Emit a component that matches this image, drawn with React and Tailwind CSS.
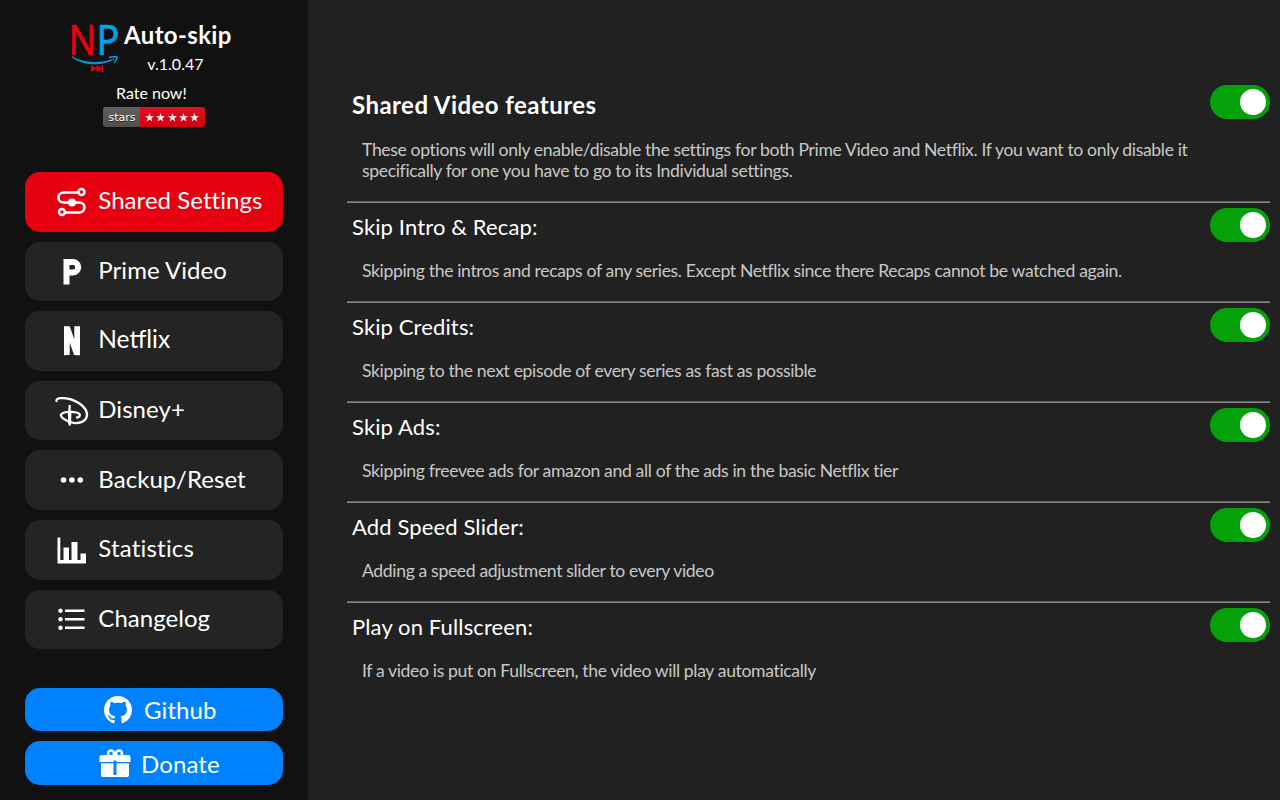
import React from "react";
import { RiNetflixFill } from "react-icons/ri";
import { BsGithub } from "react-icons/bs";

function Logo() {
  return (
    <div className="flex h-[50px] w-[48px] shrink-0 flex-col">
      <div className="flex h-[34px] text-[42px] leading-[34px] [font-family:'Noto_Sans',sans-serif]">
        <span className="w-[26px] origin-left -translate-x-[2.500px] scale-x-[0.87] text-[#e60010] [-webkit-text-stroke:0.6px_#e60010]">N</span>
        <span className="w-[22px] origin-left -translate-x-[0.500px] scale-x-[0.9] text-[#00a3e4] [-webkit-text-stroke:0.6px_#00a3e4]">P</span>
      </div>
      <svg className="h-4 w-[48px]" viewBox="0 34 48 16">
        <path d="M1 34.800 C12 41.500 30 42.500 43 37 C30 44.500 11 43 1 34.800Z" fill="#00a3e4" stroke="#00a3e4" strokeWidth="0.900" />
        <path d="M38 35.500 C42 34.500 44 34.500 46 35 C46 37 45 39 43 41" fill="none" stroke="#00a3e4" strokeWidth="1.500" />
        <path d="M20 43 L26 46.500 L20 50Z M25.500 43 L31.500 46.500 L25.500 50Z M30.500 43h1.700v7h-1.700z" fill="#e60010" />
      </svg>
    </div>
  );
}

const svg = "h-9 w-9";
const icons = {
  shared: (
    <svg className={svg} viewBox="0 0 36 36" fill="none" stroke="#fff" strokeWidth="2.500">
      <path d="M25 8.500H9.500a5 5 0 0 0-5 5a5 5 0 0 0 5 5h16a5 5 0 0 1 5 5a5 5 0 0 1-5 5H12" />
      <circle cx="27.500" cy="8" r="3" /><circle cx="8" cy="28" r="3" /><circle cx="18" cy="18.500" r="4" fill="#fff" stroke="none" />
    </svg>
  ),
  prime: (
    <svg className={svg} viewBox="0 0 36 36" fill="none" stroke="#fff" strokeWidth="6">
      <path d="M12.500 31.500V9h6.500a5 5 0 0 1 0 10.500h-6" />
    </svg>
  ),
  netflix: (
    <span className="flex h-9 w-9 items-center justify-center"><RiNetflixFill className="h-[34px] w-[32px]" /></span>
  ),
  disney: (
    <svg className={svg} viewBox="0 0 36 36" fill="none" stroke="#fff" strokeWidth="2.300" strokeLinecap="round">
      <path d="M2.500 8C1.500 5 9 4.200 16 6.200C26 9.200 33.500 15.700 33 22.500C32 29.500 24 31 18 29.500C11.500 28 6 24 7 21.500C9 18 23 18 25.500 21C26.500 23 25 24.500 23 24.500M15.700 13C15 17.500 15 26.500 15.800 31.500" />
      <path d="M16 18.500L15.600 30" strokeWidth="3" />
    </svg>
  ),
  backup: (
    <svg className={svg} viewBox="0 0 36 36" fill="#fff">
      <circle cx="9.500" cy="18" r="2.800" /><circle cx="17.900" cy="18" r="2.800" /><circle cx="26.300" cy="18" r="2.800" />
    </svg>
  ),
  stats: (
    <svg className={svg} viewBox="0 0 36 36" fill="#fff">
      <path d="M3.500 5.500h2.800V28h3.200V15.500h5.500V28H17.500V10h6v18h3v-6.500h5.500v10H3.500z" />
    </svg>
  ),
  changelog: (
    <svg className={svg} viewBox="0 0 36 36" fill="#fff">
      <path d="M11 8.500h19.500v2.600H11zM11 17h19.500v2.600H11zM11 25.400h19.500V28H11z" />
      <circle cx="6.500" cy="9.800" r="2.200" /><circle cx="6.500" cy="18.300" r="2.200" /><circle cx="6.500" cy="26.700" r="2.200" />
    </svg>
  ),
};

const nav = [
  ["shared", "Shared Settings"],
  ["prime", "Prime Video"],
  ["netflix", "Netflix"],
  ["disney", "Disney+"],
  ["backup", "Backup/Reset"],
  ["stats", "Statistics"],
  ["changelog", "Changelog"],
];

const options = [
  ["Skip Intro & Recap:", "Skipping the intros and recaps of any series. Except Netflix since there Recaps cannot be watched again."],
  ["Skip Credits:", "Skipping to the next episode of every series as fast as possible"],
  ["Skip Ads:", "Skipping freevee ads for amazon and all of the ads in the basic Netflix tier"],
  ["Add Speed Slider:", "Adding a speed adjustment slider to every video"],
  ["Play on Fullscreen:", "If a video is put on Fullscreen, the video will play automatically"],
];

function Toggle() {
  return (
    <button className="flex h-[34px] w-[60px] shrink-0 items-center justify-end rounded-full bg-[#04a108] pr-1">
      <span className="size-[26px] rounded-full bg-white" />
    </button>
  );
}

function Star() {
  return (
    <svg className="size-[9px]" viewBox="0 0 20 20" fill="#fff">
      <path d="M10 0l2.400 7.200H20l-6.100 4.500 2.300 7.300L10 14.500 3.800 19l2.300-7.300L0 7.200h7.600z" />
    </svg>
  );
}

function Gift() {
  return (
    <svg className="h-[30px] w-8" viewBox="0 0 32 30" fill="#fff">
      <circle cx="12" cy="5.500" r="3" fill="none" stroke="#fff" strokeWidth="2.500" />
      <circle cx="20" cy="5.500" r="3" fill="none" stroke="#fff" strokeWidth="2.500" />
      <path d="M2.500 7h27a2 2 0 0 1 2 2v5h-14v-1.500h-3V14h-14V9a2 2 0 0 1 2-2zM2 15.300h12.500V27h3V15.300H30V27a2 2 0 0 1-2 2H4a2 2 0 0 1-2-2z" />
    </svg>
  );
}

export default function App() {
  return (
    <div className="flex h-[800px] w-[1280px] overflow-hidden bg-[#212121] font-[Lato,sans-serif] text-white">
      <aside className="flex w-[308px] shrink-0 flex-col bg-[#111] px-[25px]">
        <header className="flex h-[172px] flex-col pt-[22px]">
          <div className="flex pl-[46px]">
            <Logo />
            <div className="flex flex-col pl-[5px]">
              <h1 className="text-2xl leading-[26px] font-bold tracking-[0.35px]">Auto-skip</h1>
              <span className="pt-[6px] pr-[5px] text-center text-base leading-[20px]">v.1.0.47</span>
            </div>
          </div>
          <div className="mt-[9px] pl-[91px] text-base leading-[20px]">Rate now!</div>
          <div className="mt-[4px] ml-[78px] flex h-5 w-[102px] overflow-hidden rounded-[3px] text-[11px] leading-[21px] [font-family:'DejaVu_Sans',sans-serif]">
            <span className="w-[37px] bg-linear-to-b from-[#616161] to-[#4e4e4e] pl-[1px] text-center [text-shadow:0_1px_0_#222]">stars</span>
            <span className="flex flex-1 items-center justify-center gap-[2.400px] bg-linear-to-b from-[#e21020] to-[#cf0010] pr-[1px]"><Star /><Star /><Star /><Star /><Star /></span>
          </div>
        </header>
        <nav className="flex flex-col gap-[10px]">
          {nav.map(([id, label], i) => (
            <a key={id} className={`flex h-[59.6px] items-center rounded-[15px] pl-[29px] text-2xl ${i === 0 ? "bg-[#e60010]" : "bg-[#242424]"}`}>
              {icons[id]}
              <span className={`pb-[3.200px] pl-[8.300px] ${id === "netflix" ? "text-[24.5px]" : id === "stats" ? "tracking-[0.2px]" : "tracking-[0.05px]"}`}>{label}</span>
            </a>
          ))}
        </nav>
        <div className="mt-[38.8px] flex flex-col gap-[10px] text-2xl">
          <a className="flex h-[43.500px] items-center rounded-[15px] bg-[#0082ff] pl-[79px]">
            <BsGithub className="size-7" />
            <span className="pl-3 tracking-[0.1px]">Github</span>
          </a>
          <a className="flex h-[43.500px] items-center rounded-[15px] bg-[#0082ff] pl-[74px]">
            <Gift />
            <span className="pt-[1px] pl-[10px] tracking-[0.1px]">Donate</span>
          </a>
        </div>
      </aside>
      <main className="flex flex-1 flex-col pt-[85px] pr-[10px] pl-[39px]">
        <section className="flex h-[116px] justify-between">
          <div className="pl-[5px]">
            <h2 className="pt-[5px] text-2xl leading-[29px] font-bold tracking-[0.45px]">Shared Video features</h2>
            <p className="mt-[20px] w-[840px] pl-[10px] text-[17.600px] leading-[21px] tracking-[-0.36px] text-[#c8c8c8]">
              These options will only enable/disable the settings for both Prime Video and Netflix. If you want to only disable it specifically for one you have to go to its Individual settings.
            </p>
          </div>
          <Toggle />
        </section>
        {options.map(([title, text]) => (
          <section key={title} className="flex h-[100px] justify-between border-t border-[#666] pt-[6px] shadow-[inset_0_1px_0_#858585]">
            <div className="pl-[5px]">
              <h3 className="pt-[5px] text-[22px] leading-[27px] tracking-[0.13px]">{title}</h3>
              <p className="mt-[20px] pl-[10px] text-[17.600px] leading-[21px] tracking-[-0.36px] text-[#c8c8c8]">{text}</p>
            </div>
            <Toggle />
          </section>
        ))}
      </main>
    </div>
  );
}
